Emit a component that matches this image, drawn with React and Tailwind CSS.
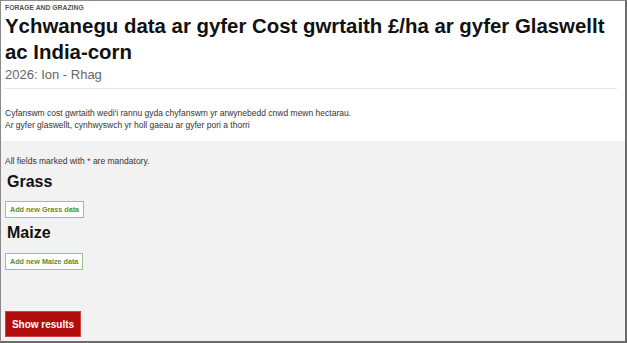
import React from 'react';

const font = { fontFamily: '"Liberation Sans", Arial, sans-serif' };

function AddButton({ label }) {
  return (
    <button
      type="button"
      className="block h-[17px] px-[4px] bg-white border border-[#9cc284] text-[#5b8f2e] text-[7.2px] font-bold leading-none"
    >
      {label}
    </button>
  );
}

export default function App() {
  return (
    <div
      className="w-[627px] h-[343px] flex flex-col bg-white border-l border-t border-[#8a8a8a] border-r-2 border-b-2 border-r-[#6b6b6b] border-b-[#6b6b6b] overflow-hidden"
      style={font}
    >
      <div className="px-[4px] pt-[2px]">
        <p className="text-[6.8px] font-bold uppercase text-[#555] leading-[10px] m-0">
          Forage and grazing
        </p>
        <h1 className="text-[20.4px] font-bold leading-[26px] text-[#111] m-0 pr-[4px]">
          Ychwanegu data ar gyfer Cost gwrtaith £/ha ar gyfer Glaswellt ac India-corn
        </h1>
        <p className="text-[13px] text-[#666] leading-[16px] m-0 mt-[2px]">2026: Ion - Rhag</p>
        <div className="h-px bg-[#e6e6e6] mt-[5px] mr-[4px]" />
        <div className="pt-[18px] pb-[10px] text-[8.5px] text-[#333] leading-[12px]">
          <p className="m-0">Cyfanswm cost gwrtaith wedi'i rannu gyda chyfanswm yr arwynebedd cnwd mewn hectarau.</p>
          <p className="m-0">Ar gyfer glaswellt, cynhwyswch yr holl gaeau ar gyfer pori a thorri</p>
        </div>
      </div>
      <div className="flex-1 bg-[#f2f2f2] px-[4px] pt-[14px] flex flex-col items-start">
        <p className="text-[8.5px] text-[#333] leading-[12px] m-0">
          All fields marked with <span className="text-[#c00]">*</span> are mandatory.
        </p>
        <h2 className="text-[16px] font-bold text-[#111] leading-[18px] m-0 mt-[6px] ml-[2px]">Grass</h2>
        <div className="mt-[10px]">
          <AddButton label="Add new Grass data" />
        </div>
        <h2 className="text-[16px] font-bold text-[#111] leading-[18px] m-0 mt-[6px] ml-[2px]">Maize</h2>
        <div className="mt-[11px]">
          <AddButton label="Add new Maize data" />
        </div>
        <div className="mt-[41px]">
          <button
            type="button"
            className="block h-[26px] w-[76px] bg-[#b30c0c] text-white text-[10px] font-bold border border-[#c94444]"
          >
            Show results
          </button>
        </div>
      </div>
    </div>
  );
}
